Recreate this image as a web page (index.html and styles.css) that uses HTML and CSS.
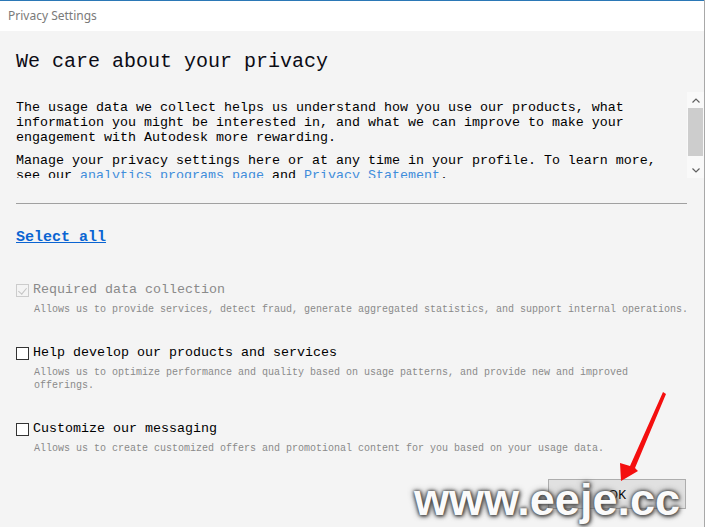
FILE: index.html
```html
<!DOCTYPE html>
<html lang="en">
<head>
    <meta charset="UTF-8">
    <title>Privacy Settings</title>
    <link rel="stylesheet" href="styles.css">
</head>
<body>

<div class="window">
    <div class="titlebar">Privacy Settings</div>

    <div class="content">
        <h1 class="heading">We care about your privacy</h1>

        <!-- Scrollable intro text -->
        <div class="intro">
            <div class="intro-text">
                <p>The usage data we collect helps us understand how you use our products, what information you might be interested in, and what we can improve to make your engagement with Autodesk more rewarding.</p>
                <p>Manage your privacy settings here or at any time in your profile. To learn more, see our <a href="#">analytics programs page</a> and <a href="#">Privacy Statement</a>.</p>
            </div>
            <div class="scrollbar">
                <span class="scroll-btn">
                    <svg width="8" height="5" viewBox="0 0 8 5"><polyline points="0.5,4.5 4,1 7.5,4.5" fill="none" stroke="#606060" stroke-width="1.2"/></svg>
                </span>
                <span class="scroll-thumb"></span>
                <span class="scroll-track"></span>
                <span class="scroll-btn">
                    <svg width="8" height="5" viewBox="0 0 8 5"><polyline points="0.5,0.5 4,4 7.5,0.5" fill="none" stroke="#606060" stroke-width="1.2"/></svg>
                </span>
            </div>
        </div>

        <hr class="divider">

        <a class="select-all" href="#">Select all</a>

        <div class="options">
            <div class="option disabled">
                <label class="option-label"><span class="box checked"></span>Required data collection</label>
                <div class="option-desc">Allows us to provide services, detect fraud, generate aggregated statistics, and support internal operations.</div>
            </div>
            <div class="option">
                <label class="option-label"><span class="box"></span>Help develop our products and services</label>
                <div class="option-desc">Allows us to optimize performance and quality based on usage patterns, and provide new and improved<br>offerings.</div>
            </div>
            <div class="option">
                <label class="option-label"><span class="box"></span>Customize our messaging</label>
                <div class="option-desc">Allows us to create customized offers and promotional content for you based on your usage data.</div>
            </div>
        </div>

        <div class="actions">
            <button class="ok">OK</button>
        </div>
    </div>

    <!-- screenshot annotations -->
    <svg class="arrow" width="705" height="527" viewBox="0 0 705 527">
        <polygon points="663,392 666,394 635,468 638,471 621,481 620,463 630,466" fill="#f40f0f"/>
    </svg>
    <div class="watermark">www.eeje.cc</div>
</div>

</body>
</html>
```

FILE: styles.css
```css
body {
    margin: 0;
    width: 705px;
    height: 527px;
    overflow: hidden;
    background-color: #f4f4f4;
}
.window {
    position: relative;
    width: 705px;
    height: 527px;
    box-sizing: border-box;
    border-right: 1px solid #a8a8a8;
    background-color: #f4f4f4;
    font-family: "Liberation Mono", "DejaVu Sans Mono", monospace;
    color: #000;
}
.titlebar {
    height: 30px;
    border-top: 1px solid #2b78b6;
    background-color: #fff;
    padding-left: 8px;
    font-family: "Noto Sans", "Liberation Sans", sans-serif;
    font-size: 12px;
    line-height: 30px;
    color: #7a7a7a;
}
.content {
    padding: 19px 17px 0 16px;
}
.heading {
    margin: 0;
    font-size: 20px;
    font-weight: normal;
    line-height: 24px;
    color: #0c0c14;
}
.intro {
    display: flex;
    height: 86px;
    margin: 18px -17px 0 0;
}
.intro-text {
    flex: 1;
    overflow: hidden;
    padding-top: 8px;
    padding-right: 20px;
    font-size: 13.33px;
    line-height: 15px;
}
.intro-text p {
    margin: 0 0 8px 0;
}
.intro-text a {
    color: #3f8ddb;
    text-decoration: none;
}
.scrollbar {
    width: 17px;
    display: flex;
    flex-direction: column;
    background-color: #f9f9f9;
}
.scroll-btn {
    height: 16px;
    display: flex;
    align-items: center;
    justify-content: center;
}
.scroll-thumb {
    height: 48px;
    margin: 0 1px;
    background-color: #cdcdcd;
}
.scroll-track {
    flex: 1;
}
.divider {
    margin: 25px 0 0 0;
    border: none;
    border-top: 1px solid #a0a0a0;
}
.select-all {
    display: inline-block;
    margin-top: 25px;
    font-size: 15px;
    font-weight: bold;
    line-height: 18px;
    color: #0a64d2;
}
.options {
    margin-top: 35px;
}
.option {
    margin-bottom: 29px;
}
.option-label {
    display: flex;
    align-items: center;
    font-size: 13.33px;
    line-height: 16px;
}
.box {
    position: relative;
    width: 11px;
    height: 11px;
    margin-right: 4px;
    border: 1px solid #333;
    background-color: #fff;
}
.disabled .option-label {
    color: #8a8a8a;
}
.disabled .box {
    border-color: #cccccc;
    background-color: #f4f4f4;
}
.box.checked::after {
    content: "";
    position: absolute;
    left: 3px;
    top: 1px;
    width: 4px;
    height: 7px;
    border-right: 1px solid #c4c4c4;
    border-bottom: 1px solid #c4c4c4;
    transform: rotate(40deg);
}
.option-desc {
    margin-top: 5px;
    padding-left: 18px;
    white-space: nowrap;
    font-size: 10px;
    line-height: 13px;
    color: #8a8a8a;
}
.actions {
    display: flex;
    justify-content: flex-end;
    margin-top: -5px;
}
.ok {
    width: 138px;
    height: 30px;
    margin-right: 1px;
    border: 1px solid #adadad;
    background-color: #e1e1e1;
    font-family: "Noto Sans", "Liberation Sans", sans-serif;
    font-size: 13px;
    color: #000;
}
.arrow {
    position: absolute;
    left: 0;
    top: 0;
}
.watermark {
    position: absolute;
    left: 414px;
    top: 472px;
    font-family: "Liberation Sans", Arial, sans-serif;
    font-size: 45px;
    font-weight: bold;
    line-height: 56px;
    color: #fafafa;
    text-shadow: 0 0 3px #444, 0 0 6px #555, 1px 1px 4px #333;
}
```
